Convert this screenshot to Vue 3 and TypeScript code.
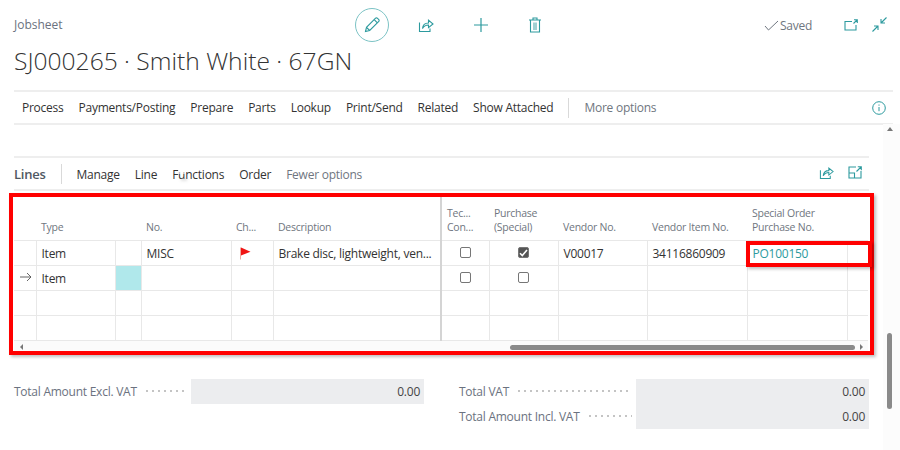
<script setup lang="ts">
type Row = {
  marker?: boolean
  type?: string
  no?: string
  flag?: boolean
  description?: string
  tech?: boolean
  purchase?: boolean
  vendor?: string
  vendorItem?: string
  order?: string
  active?: boolean
}

const menu = ['Process', 'Payments/Posting', 'Prepare', 'Parts', 'Lookup', 'Print/Send', 'Related', 'Show Attached']
const lineMenu = ['Manage', 'Line', 'Functions', 'Order']

const rows: Row[] = [
  {
    type: 'Item',
    no: 'MISC',
    flag: true,
    description: 'Brake disc, lightweight, ven...',
    tech: false,
    purchase: true,
    vendor: 'V00017',
    vendorItem: '34116860909',
    order: 'PO100150',
  },
  { marker: true, type: 'Item', tech: false, purchase: false, active: true },
  {},
  {},
]
</script>

<template>
  <div class="page">
    <header class="head">
      <div class="head-top">
        <span class="caption">Jobsheet</span>
        <div class="actions">
          <button class="edit" type="button" aria-label="Edit">
            <svg width="18" height="18" viewBox="0 0 18 18" fill="none" stroke="currentColor" stroke-width="1.1">
              <path d="M2.5 15.5l1-4.2L12.6 2.2a1.2 1.2 0 0 1 1.7 0l1.5 1.5a1.2 1.2 0 0 1 0 1.7L6.7 14.5z" />
              <path d="M11.2 3.6l3.2 3.2M3.5 11.3l3.2 3.2" />
            </svg>
          </button>
          <svg class="icon share" width="16" height="16" viewBox="0 0 16 16" fill="none" stroke="currentColor" stroke-width="1.1">
            <path d="M1.5 5.500v9h10.500v-3" />
            <path d="M4.500 11.500c.3-3.500 2.600-5.500 6-5.500V3.200L15 7l-4.500 3.700V8c-2.500 0-4.500 1-6 3.500z" />
          </svg>
          <svg class="icon plus" width="16" height="16" viewBox="0 0 16 16" stroke="currentColor" stroke-width="1.200">
            <path d="M8 1v14M1 8h14" />
          </svg>
          <svg class="icon bin" width="14" height="16" viewBox="0 0 14 16" fill="none" stroke="currentColor" stroke-width="1.100">
            <path d="M1 3h12M5 3V1h4v2M2.500 3v12h9V3" />
            <rect x="5" y="5.500" width="4" height="7.500" fill="currentColor" opacity="0.45" stroke="none" />
          </svg>
        </div>
        <div class="status">
          <span class="saved">
            <svg width="15" height="11" viewBox="0 0 15 11" fill="none" stroke="#6f7680" stroke-width="1">
              <path d="M1 6l3.500 4L14 1" />
            </svg>
            Saved
          </span>
          <svg class="icon popout" width="14" height="12" viewBox="0 0 14 12" fill="none" stroke="currentColor" stroke-width="1.100">
            <path d="M8 2.500H1v8.500h11V6" />
            <path d="M9.500 4.500L13 1M10 .7h3.300V4" />
          </svg>
          <svg class="icon" width="15" height="15" viewBox="0 0 15 15" fill="none" stroke="currentColor" stroke-width="1.100">
            <path d="M14.500.5L9 6M9 2v4h4M.5 14.500L6 9M2 9h4v4" />
          </svg>
        </div>
      </div>
      <h1>SJ000265 · Smith White · 67GN</h1>
    </header>

    <nav class="menu">
      <a v-for="item in menu" :key="item">{{ item }}</a>
      <span class="divider"></span>
      <a class="muted">More options</a>
      <svg class="info" width="14" height="14" viewBox="0 0 14 14" fill="none" stroke="currentColor" stroke-width="1">
        <circle cx="7" cy="7" r="6.300" />
        <path d="M7 6v4.200M7 3.500v1.200" />
      </svg>
    </nav>

    <nav class="lines-bar">
      <strong>Lines</strong>
      <span class="divider"></span>
      <a v-for="item in lineMenu" :key="item" class="line-item">{{ item }}</a>
      <a class="muted line-item">Fewer options</a>
      <span class="bar-icons">
        <svg class="icon" width="15" height="15" viewBox="0 0 16 16" fill="none" stroke="currentColor" stroke-width="1.100">
          <path d="M1.500 5.500v9h10.500v-3" />
          <path d="M4.500 11.500c.3-3.500 2.600-5.500 6-5.500V3.200L15 7l-4.500 3.700V8c-2.500 0-4.500 1-6 3.500z" />
        </svg>
        <svg class="icon" width="14" height="13" viewBox="0 0 14 13" fill="none" stroke="currentColor" stroke-width="1.100">
          <path d="M8 1H1v11h12V5M1 7h5.500v5" />
          <path d="M8.500 5.500L13 1M9.800.7h3.500v3.500" />
        </svg>
      </span>
    </nav>

    <section class="grid-wrap">
      <table class="lines">
        <colgroup>
          <col style="width: 22px" />
          <col style="width: 79px" />
          <col style="width: 26px" />
          <col style="width: 90px" />
          <col style="width: 42px" />
          <col style="width: 168px" />
          <col style="width: 48px" />
          <col style="width: 69px" />
          <col style="width: 89px" />
          <col style="width: 100px" />
          <col style="width: 100px" />
          <col style="width: 21px" />
        </colgroup>
        <thead>
          <tr>
            <th></th>
            <th>Type</th>
            <th></th>
            <th>No.</th>
            <th>Ch...</th>
            <th class="freeze">Description</th>
            <th>Tec...<br />Con...</th>
            <th>Purchase<br />(Special)</th>
            <th>Vendor No.</th>
            <th>Vendor Item No.</th>
            <th>Special Order<br />Purchase No.</th>
            <th></th>
          </tr>
        </thead>
        <tbody>
          <tr v-for="(row, index) in rows" :key="index">
            <td class="marker">
              <svg v-if="row.marker" width="12" height="10" viewBox="0 0 12 10" fill="none" stroke="#555" stroke-width="0.900">
                <path d="M0 5h11M7 1l4 4-4 4" />
              </svg>
            </td>
            <td>{{ row.type }}</td>
            <td :class="{ active: row.active }"></td>
            <td>{{ row.no }}</td>
            <td>
              <svg v-if="row.flag" class="flag" width="12" height="13" viewBox="0 0 12 13">
                <path d="M1 .5h1v12H1z" fill="#f0a8a0" />
                <path d="M2 .5l9.500 4.300L2 8.500z" fill="#f01414" />
              </svg>
            </td>
            <td class="freeze desc">{{ row.description }}</td>
            <td class="center">
              <span v-if="row.tech !== undefined" class="check"></span>
            </td>
            <td class="center">
              <span v-if="row.purchase !== undefined" class="check" :class="{ on: row.purchase }">
                <svg v-if="row.purchase" width="9" height="8" viewBox="0 0 9 8" fill="none" stroke="#fff" stroke-width="1.600">
                  <path d="M1 4.200l2.300 2.300L8 1" />
                </svg>
              </span>
            </td>
            <td>{{ row.vendor }}</td>
            <td>{{ row.vendorItem }}</td>
            <td><a class="link">{{ row.order }}</a></td>
            <td></td>
          </tr>
        </tbody>
      </table>
      <div class="hscroll">
        <span class="arrow left"></span>
        <span class="thumb"></span>
        <span class="arrow right"></span>
      </div>
    </section>

    <section class="totals">
      <div class="total-col">
        <div class="total-row">
          <span class="total-label">Total Amount Excl. VAT</span>
          <span class="dots"></span>
          <span class="total-value">0.00</span>
        </div>
      </div>
      <div class="total-col">
        <div class="total-row">
          <span class="total-label">Total VAT</span>
          <span class="dots"></span>
          <span class="total-value">0.00</span>
        </div>
        <div class="total-row">
          <span class="total-label">Total Amount Incl. VAT</span>
          <span class="dots"></span>
          <span class="total-value">0.00</span>
        </div>
      </div>
    </section>

    <!-- mouse pointer smudge left in the screenshot, over "Functions" -->
    <span class="smudge"></span>

    <!-- red callouts drawn on top of the screenshot -->
    <div class="callout big"></div>
    <div class="callout small"></div>

    <span class="vtrack"><span class="vthumb"></span></span>
    <span class="vup"></span>
  </div>
</template>

<style scoped>
.page {
  position: relative;
  box-sizing: border-box;
  width: 900px;
  height: 450px;
  padding: 0 31px 0 14px;
  overflow: hidden;
  background: #fff;
  color: #333;
  font-family: 'Open Sans', 'Noto Sans', sans-serif;
  font-size: 12px;
  letter-spacing: -0.250px;
}

.head {
  height: 90px;
}

.head-top {
  display: flex;
  align-items: center;
  height: 49px;
}

.caption {
  width: 341px;
  color: #6b7280;
  font-size: 12px;
  letter-spacing: 0;
}

.actions {
  display: flex;
  align-items: center;
  color: #2c9a9e;
}

.edit {
  display: flex;
  align-items: center;
  justify-content: center;
  width: 34px;
  height: 34px;
  margin-right: 29px;
  padding: 0;
  border: 1px solid #7cc3c5;
  border-radius: 50%;
  background: #fff;
  color: #2c9a9e;
}

.share {
  margin-right: 39px;
}

.plus {
  margin-right: 39px;
}

.status {
  display: flex;
  align-items: center;
  gap: 14px;
  margin-left: auto;
  margin-right: -18px;
  color: #2c9a9e;
}

.saved {
  display: flex;
  align-items: center;
  gap: 1px;
  margin-right: 18px;
  padding-top: 1px;
  color: #6f7680;
}

h1 {
  margin: 0;
  color: #333;
  font-size: 24.600px;
  font-weight: 300;
  line-height: 24px;
  letter-spacing: 0;
}

.menu,
.lines-bar {
  display: flex;
  align-items: center;
  gap: 15px;
  box-sizing: border-box;
  border-top: 2px solid #eee;
  border-bottom: 2px solid #eee;
}

.menu {
  height: 35px;
  margin-right: -24px;
  padding-left: 8px;
}

.muted {
  color: #6f7680;
}

.divider {
  width: 1px;
  height: 20px;
  background: #d9d9d9;
}

.info {
  margin-left: auto;
  margin-right: 7px;
  color: #2c9a9e;
}

.lines-bar {
  height: 35px;
  margin-top: 31px;
}

.line-item {
  padding-top: 1px;
}

.lines-bar strong {
  color: #505862;
  font-size: 13px;
  font-weight: 600;
}

.bar-icons {
  display: flex;
  align-items: center;
  gap: 14px;
  margin-left: auto;
  margin-right: 7px;
  padding-bottom: 2px;
  color: #2c9a9e;
}

.grid-wrap {
  margin-top: 5px;
}

.lines {
  width: 854px;
  border-collapse: collapse;
  table-layout: fixed;
}

.lines th {
  box-sizing: border-box;
  height: 44px;
  padding: 0 4px 6px 5px;
  color: #6f7680;
  font-size: 10.500px;
  font-weight: 400;
  line-height: 14px;
  text-align: left;
  vertical-align: bottom;
  white-space: nowrap;
}

.lines td {
  box-sizing: border-box;
  height: 25px;
  padding: 1px 5px 0;
  border-top: 1px solid #e8e8e8;
  border-right: 1px solid #e8e8e8;
  overflow: hidden;
  vertical-align: middle;
}

.lines td:last-child {
  border-right: 0;
}

.lines th.freeze,
.lines td.freeze {
  border-right: 2px solid #d4d4d4;
}

.lines tbody tr:last-child td {
  border-bottom: 1px solid #e8e8e8;
}

.desc {
  white-space: nowrap;
}

.lines td.marker {
  padding: 0 0 0 6px;
}

.lines td.active {
  background: #b0e8eb;
}

.flag {
  display: block;
  margin-left: 2px;
}

.center {
  text-align: center;
}

.check {
  display: inline-flex;
  align-items: center;
  justify-content: center;
  box-sizing: border-box;
  width: 11px;
  height: 11px;
  margin-bottom: 3px;
  border: 1px solid #767676;
  border-radius: 2px;
  vertical-align: middle;
}

.check.on {
  background: #555;
}

.link {
  color: #2c9a9e;
}

.hscroll {
  display: flex;
  align-items: center;
  width: 854px;
  height: 13px;
  background: #fbfbfb;
}

.arrow {
  width: 0;
  height: 0;
  border-top: 3px solid transparent;
  border-bottom: 3px solid transparent;
}

.arrow.left {
  margin-left: 6px;
  border-right: 3px solid #777;
}

.arrow.right {
  margin-right: 5px;
  margin-left: 5px;
  border-left: 3px solid #777;
}

.thumb {
  width: 345px;
  height: 5px;
  margin-left: auto;
  border-radius: 3px;
  background: #8a8a8a;
}

.totals {
  display: flex;
  gap: 35px;
  margin-top: 25px;
}

.total-col {
  width: 410px;
}

.total-row {
  display: flex;
  align-items: center;
  height: 25px;
  color: #6b7280;
}

.dots {
  flex: 1;
  height: 2px;
  margin: 0 4px 0 9px;
  background: radial-gradient(circle at 1px 1px, #c4c4c4 1px, transparent 1px) 0 0 / 6px 2px repeat-x;
}

.total-value {
  box-sizing: border-box;
  width: 233px;
  height: 25px;
  padding-right: 4px;
  background: #ecedef;
  color: #444;
  line-height: 25px;
  text-align: right;
}

.smudge {
  position: absolute;
  top: 169px;
  left: 178px;
  width: 8px;
  height: 5px;
  background: rgba(255, 255, 255, 0.6);
  box-shadow: 2px 8px 3px -1px rgba(170, 170, 170, 0.35);
}

.callout {
  position: absolute;
  box-sizing: border-box;
  border: 4px solid #f00;
  box-shadow: 2px 2px 3px rgba(0, 0, 0, 0.25);
  pointer-events: none;
}

.callout.big {
  top: 193px;
  left: 9px;
  width: 865px;
  height: 162px;
}

.callout.small {
  top: 241px;
  left: 746px;
  width: 126px;
  height: 26px;
}

.vtrack {
  position: absolute;
  top: 124px;
  right: 0;
  width: 17px;
  height: 326px;
  background: #fcfcfc;
}

.vthumb {
  position: absolute;
  top: 209px;
  left: 4px;
  width: 5px;
  height: 76px;
  border-radius: 3px;
  background: #8a8a8a;
}

.vup {
  position: absolute;
  top: 127px;
  left: 887px;
  border-right: 3px solid transparent;
  border-bottom: 4px solid #777;
  border-left: 3px solid transparent;
}
</style>
